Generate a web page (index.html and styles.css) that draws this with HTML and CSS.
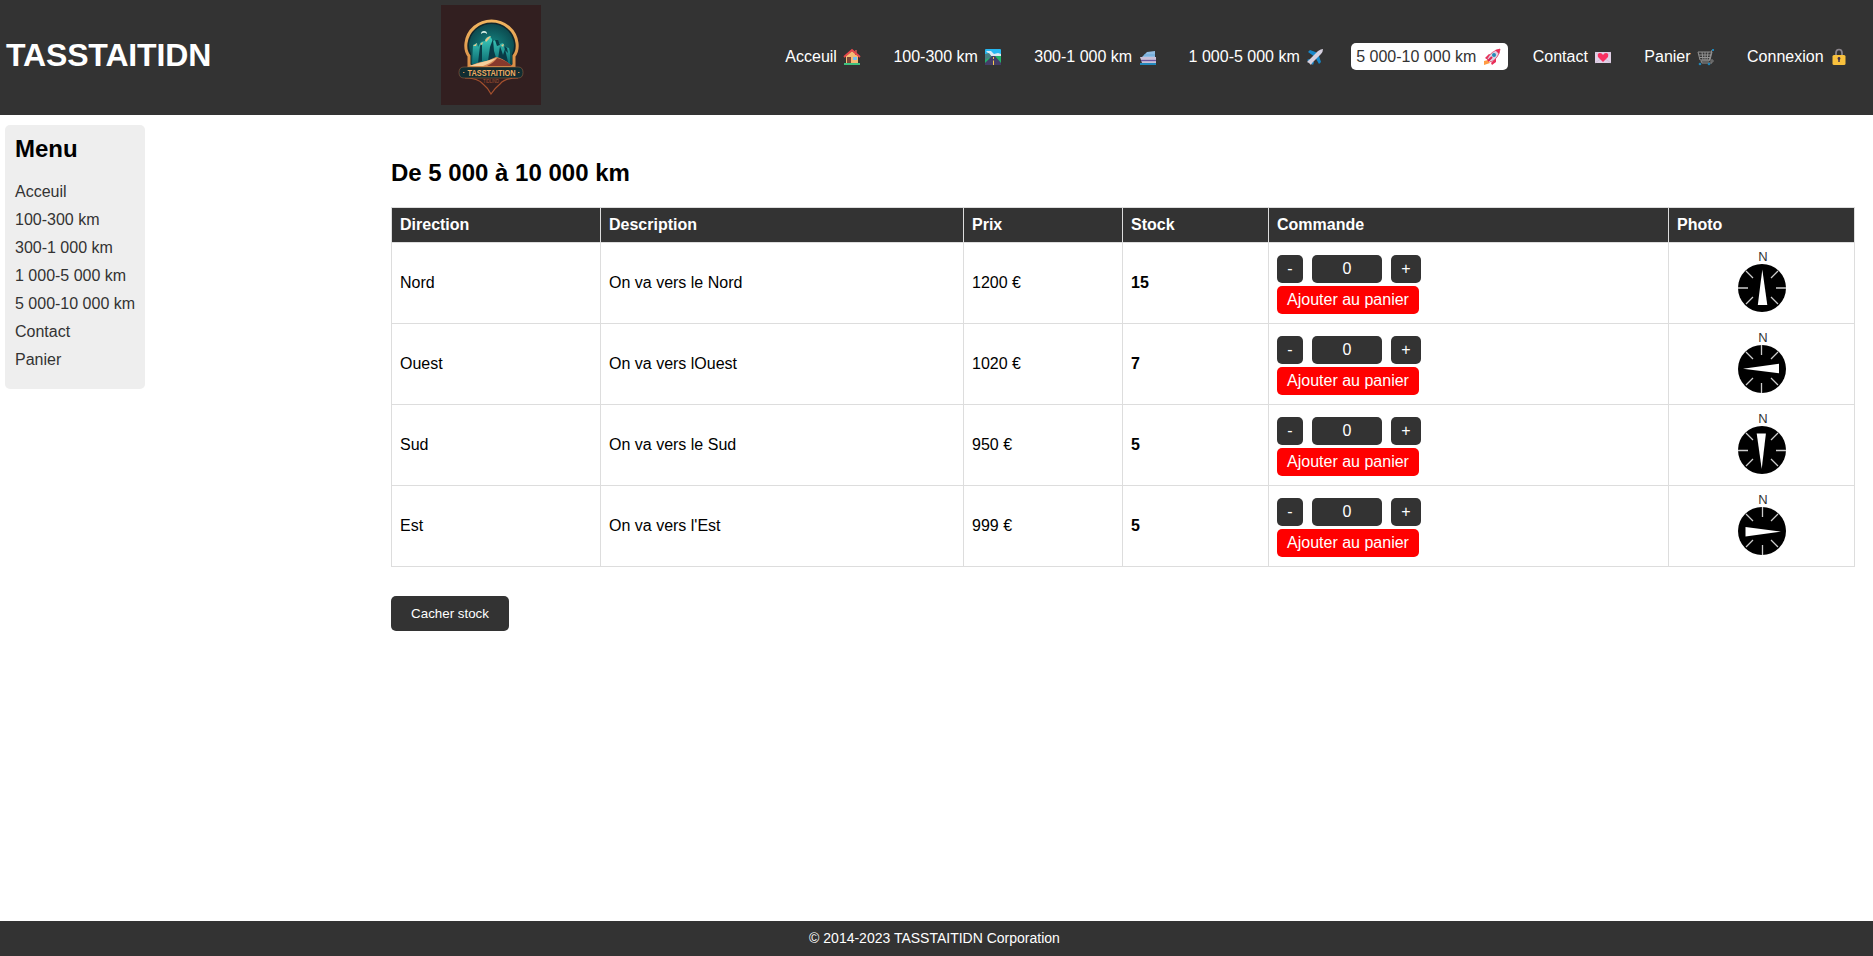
FILE: index.html
```
<!DOCTYPE html>
<html lang="fr">
<head>
<meta charset="utf-8">
<title>TASSTAITIDN</title>
<link rel="stylesheet" href="styles.css">
</head>
<body>
<header class="header">
  <h1 class="brand">TASSTAITIDN</h1>
  <svg class="logo" viewBox="0 0 100 100">
    <defs>
      <linearGradient id="gold" x1="0" y1="0" x2="0" y2="1"><stop offset="0" stop-color="#f0b45f"/><stop offset="1" stop-color="#d98e48"/></linearGradient>
      <radialGradient id="sky" cx=".5" cy=".55" r=".6"><stop offset="0" stop-color="#148a86"/><stop offset="1" stop-color="#0b4248"/></radialGradient>
      <linearGradient id="rock" x1="0" y1="0" x2="0" y2="1"><stop offset="0" stop-color="#3fd0c0"/><stop offset="1" stop-color="#0c6a70"/></linearGradient>
    </defs>
    <rect width="100" height="100" fill="#321f20"/>
    <path d="M28 61V51Q24 46 25 38A25.7 25.2 0 0 1 76 38Q77 46 73 51V61Z" fill="#10262b" stroke="url(#gold)" stroke-width="3"/>
    <path d="M30 60V49Q27 42 28.500 36A22.500 21.500 0 0 1 72.500 36Q74 43 71 49V60Z" fill="url(#sky)"/>
    <path d="M40 29a3 3 0 0 1 6 0q-3-2.500-6 0Z" fill="#dcf3e8"/>
    <path d="M31 59L32 40l4-2 1 4 3-5 4-1 1-3 4-2 3 5 3-1 4 4 3-1 2 4 4 1 1 4v12Z" fill="url(#rock)"/>
    <path d="M37 58l2-17 2-3 0 18ZM47 56l2-14 3-8 1 12 3 10-4-3-2 4ZM57 54l2-13 3 9 2-6 3 13ZM54 35l3 0 2 5-3 1ZM63 41l3 2 1 5-3-3Z" fill="#093b46"/>
    <path d="M44 35l3-3 3-1-2 3-3 3ZM32 41l4-3-1 3ZM39 39l3-2-1 3ZM60 40l3-1-1 3Z" fill="#e6c58a"/>
    <path d="M28 61q9-4 18-5l9-4q7 1 16 9Z" fill="#d98b58"/>
    <path d="M56 53q-2 4-10 8h25q-6-6-15-8Z" fill="#873a2d"/>
    <path d="M28 61q13-4 28-8-6 5-14 8Z" fill="#f5d09d"/>
    <path d="M24 73q13 0 18 6 5 4 8 10 4-6 9-10 5-6 18-6" fill="none" stroke="#a4502e" stroke-width="1.200"/>
    <path d="M23 62H77Q82 62 82 67.500T77 73H23Q18 73 18 67.500T23 62Z" fill="#102d31" stroke="#a76b42" stroke-width=".5"/>
    <text x="26.500" y="71.200" class="logo-name" textLength="48" lengthAdjust="spacingAndGlyphs">TASSTAITION</text>
    <text x="42" y="78" class="logo-sub" textLength="16" lengthAdjust="spacingAndGlyphs">TIDLIND</text>
    <path d="M22 67.500h1.500M77 67.500h1.500" stroke="#c98850"/>
  </svg>
  <nav class="nav">
    <a class="nav-link">Acceuil <svg class="emoji" viewBox="0 0 22 18"><path d="M3 15h16v2H3Z" fill="#3fc380"/><path d="M5 8l6-5 6 5v7H5Z" fill="#f5bb75"/><path d="M14 2h2v5h-2Z" fill="#a5504b"/><path d="M3 9l8-7 8 7" fill="none" stroke="#e8474c" stroke-width="1.800"/><path d="M6 9h4v6H6Z" fill="#7b4538"/><path d="M12 9h4v3h-4Z" fill="#78bff0"/></svg></a>
    <a class="nav-link">100-300 km <svg class="emoji" viewBox="0 0 22 18"><rect x="3" y="1" width="16" height="16" rx="1" fill="#26b8f2"/><path d="M3 8h16v9H3Z" fill="#22b36b"/><path d="M4 3l5 0 3 3 4-1 3 1v2H9Z" fill="#dbe9f3"/><path d="M3 6l4-1 3 4-3 1-4 2Z" fill="#477f83"/><path d="M10 8h3l6 7v2H3v-2Z" fill="#443d67"/><path d="M11.500 9v2m0 1.500V17" stroke="#f8cb4c"/></svg></a>
    <a class="nav-link">300-1 000 km <svg class="emoji" viewBox="0 0 22 18"><path d="M3 15h16v2H3Z" fill="#2189bd"/><path d="M6 8l4-4 8-1v6H5Z" fill="#8fbce2"/><path d="M3 9h16v6H5Z" fill="#c8bfd7"/><path d="M7 7h11" stroke="#64a7d7"/><path d="M4 12.500h15" stroke="#69529b" stroke-width="1.300"/></svg></a>
    <a class="nav-link">1 000-5 000 km <svg class="emoji" viewBox="0 0 22 18"><path d="M4 4l2-2 8 3 3 9-2 2-4-7ZM3 12l2-1 5 3-1 3Z" fill="#1686c8"/><path d="M5 12l9-9q3-2 5-2 0 3-2 5l-9 9-1 2-2-2-2-1Z" fill="#d6d0df"/></svg></a>
    <a class="nav-link active">5 000-10 000 km <svg class="emoji" viewBox="0 0 22 18"><path d="M3 13l4-1 2 3-6 2Z" fill="#ff9b43"/><path d="M4 10l4-4 3 1-4 5ZM10 15l5-5v4l-4 3Z" fill="#e82e58"/><path d="M6 11q4-8 13-10-1 9-9 13Z" fill="#ddd4e2" stroke="#e23b61" stroke-width=".8"/><path d="M14 2l5-1-1 5Z" fill="#e72d58"/><circle cx="13" cy="7" r="2" fill="#238bb7"/><path d="M7 13l4-4" stroke="#de2454" stroke-width="2"/></svg></a>
    <a class="nav-link">Contact <svg class="emoji" viewBox="0 0 22 18"><rect x="3" y="4" width="16" height="11" fill="#e0d0e5"/><path d="M3 4l7 6-7 5M19 4l-7 6 7 5" fill="none" stroke="#cdbbd5" stroke-width=".8"/><path d="M11 14L6 9q-1-4 2-4 2 0 3 2 1-2 3-2 3 0 2 4Z" fill="#f92f60"/></svg></a>
    <a class="nav-link">Panier <svg class="emoji" viewBox="0 0 22 18"><path d="M3 4l2 8h11l2-8Z" fill="#353535"/><path d="M19 2h-2l-3 11H6l1 2h10M3 4h14l-2 8H5ZM4 7h12M4.500 9.500H16M7 4l1 8M10 4v8M13 4l-1 8" fill="none" stroke="#929292" stroke-width="1"/><path d="M17 2h2" stroke="#2184b5" stroke-width="2"/><circle cx="5" cy="16" r="1.300" fill="#2184b5"/><circle cx="14" cy="16" r="1.300" fill="#2184b5"/><circle cx="17" cy="13" r="1.200" fill="none" stroke="#858585"/></svg></a>
    <a class="nav-link">Connexion <svg class="emoji" viewBox="0 0 22 18"><path d="M8 8V5q0-3.500 3-3.500T14 5v3" fill="none" stroke="#8b858c" stroke-width="1.700"/><rect x="4.500" y="7" width="13" height="10" rx="1.500" fill="#f9c13d"/><path d="M11 10v4" stroke="#443249" stroke-width="1.500"/><circle cx="11" cy="10.500" r="1.400" fill="#443249"/></svg></a>
  </nav>
</header>
<div class="page">
  <aside class="menu">
    <h2 class="menu-title">Menu</h2>
    <ul class="menu-list"><li>Acceuil</li><li>100-300 km</li><li>300-1 000 km</li><li>1 000-5 000 km</li><li>5 000-10 000 km</li><li>Contact</li><li>Panier</li></ul>
  </aside>
  <main class="content">
    <h2 class="title">De 5 000 à 10 000 km</h2>
    <table class="products">
      <colgroup><col class="c-dir"><col class="c-desc"><col class="c-price"><col class="c-stock"><col class="c-order"><col class="c-photo"></colgroup>
      <thead><tr><th>Direction</th><th>Description</th><th>Prix</th><th>Stock</th><th>Commande</th><th>Photo</th></tr></thead>
      <tbody>
        <tr><td>Nord</td><td>On va vers le Nord</td><td>1200 €</td><td class="stock">15</td>
          <td><div class="qty"><button class="btn minus">-</button><span class="btn count">0</span><button class="btn plus">+</button></div><button class="btn add">Ajouter au panier</button></td>
          <td><svg class="compass" viewBox="-30 -40 60 70"><text class="north" x="1" y="-27.500">N</text><circle r="24"/><path class="tick" d="M-24 0h10M14 0h10M-16-17l7 7M16-17l-7 7M-16 16l7-7M16 16l-7-7"/><path class="needle" d="M.3-18.500L5.300 17H-4.200Z"/></svg></td></tr>
        <tr><td>Ouest</td><td>On va vers lOuest</td><td>1020 €</td><td class="stock">7</td>
          <td><div class="qty"><button class="btn minus">-</button><span class="btn count">0</span><button class="btn plus">+</button></div><button class="btn add">Ajouter au panier</button></td>
          <td><svg class="compass" viewBox="-30 -40 60 70"><text class="north" x="1" y="-27.500">N</text><circle r="24"/><path class="tick" d="M-.5-24v10M-.5 14v10M-16-17l7 7M16-17l-7 7M-16 16l7-7M16 16l-7-7"/><path class="needle" d="M-19-.3L17-5.300V4.200Z"/></svg></td></tr>
        <tr><td>Sud</td><td>On va vers le Sud</td><td>950 €</td><td class="stock">5</td>
          <td><div class="qty"><button class="btn minus">-</button><span class="btn count">0</span><button class="btn plus">+</button></div><button class="btn add">Ajouter au panier</button></td>
          <td><svg class="compass" viewBox="-30 -40 60 70"><text class="north" x="1" y="-27.500">N</text><circle r="24"/><path class="tick" d="M-24 .5h10M14 .5h10M-16-17l7 7M16-17l-7 7M-16 16l7-7M16 16l-7-7"/><path class="needle" d="M-.3 19L-5.300-16.500H3.900Z"/></svg></td></tr>
        <tr><td>Est</td><td>On va vers l'Est</td><td>999 €</td><td class="stock">5</td>
          <td><div class="qty"><button class="btn minus">-</button><span class="btn count">0</span><button class="btn plus">+</button></div><button class="btn add">Ajouter au panier</button></td>
          <td><svg class="compass" viewBox="-30 -40 60 70"><text class="north" x="1" y="-27.500">N</text><circle r="24"/><path class="tick" d="M.5-24v10M.5 14v10M-16-17l7 7M16-17l-7 7M-16 16l7-7M16 16l-7-7"/><path class="needle" d="M19 .5L-16.500-3.900V5.500Z"/></svg></td></tr>
      </tbody>
    </table>
    <button class="toggle">Cacher stock</button>
  </main>
</div>
<footer class="footer">© 2014-2023 TASSTAITIDN Corporation</footer>
</body>
</html>
```
FILE: styles.css
```
* { box-sizing: border-box; }
body {
  margin: 0;
  height: 956px;
  display: flex;
  flex-direction: column;
  font: 16px/18px "Liberation Sans", Arial, sans-serif;
  color: #000;
  background: #fff;
}
h1, h2, ul { margin: 0; padding: 0; }
button { font-family: inherit; border: 0; }
.header {
  height: 115px;
  padding: 5px 18px 10px 6px;
  display: grid;
  grid-template-columns: 435px 100px 1fr;
  align-items: center;
  background: #333;
  color: #fff;
}
.brand { font-size: 32px; line-height: 36px; letter-spacing: -0.15px; padding-bottom: 1px; }
.logo { display: block; width: 100px; height: 100px; }
.logo-name { font: bold 9.5px "Liberation Sans", sans-serif; fill: #efa960; }
.logo-sub { font: 5.5px "Liberation Sans", sans-serif; fill: #a65132; }
.nav { display: flex; justify-content: flex-end; gap: 20px; padding-top: 3px; }
.nav-link {
  display: flex;
  align-items: center;
  height: 27px;
  padding: 0 5px;
  border-radius: 5px;
  white-space: pre;
}
.active { background: #fff; color: #333; }
.emoji { width: 22px; height: 18px; flex: none; }
.page { flex: 1; display: flex; align-items: flex-start; padding: 10px 18px 0 5px; }
.menu {
  width: 140px;
  height: 264px;
  padding: 10px;
  border-radius: 5px;
  background: #eee;
}
.menu-title { font-size: 24px; line-height: 28px; margin-bottom: 15px; }
.menu-list { list-style: none; color: #333; line-height: 28px; white-space: nowrap; }
.content { width: 1464px; margin-left: auto; padding-top: 34px; }
.title { font-size: 24px; line-height: 28px; margin-bottom: 20px; }
.products { width: 1464px; table-layout: fixed; border-collapse: collapse; }
.products th, .products td { border: 1px solid #ddd; padding: 0 8px; text-align: left; vertical-align: middle; }
.products th { height: 35px; background: #333; color: #fff; }
.products td { height: 81px; }
.products .stock { font-weight: bold; }
.c-dir { width: 209px; }
.c-desc { width: 363px; }
.c-price { width: 159px; }
.c-stock { width: 146px; }
.c-order { width: 400px; }
.c-photo { width: 186px; }
.qty { display: flex; gap: 9px; margin: 3px 0; }
.btn {
  display: block;
  height: 28px;
  padding: 0;
  border-radius: 5px;
  background: #333;
  color: #fff;
  font-size: 16px;
  line-height: 28px;
  text-align: center;
}
.minus { width: 26px; }
.count { width: 70px; }
.plus { width: 30px; }
.add { width: 142px; background: #f00; }
.compass { display: block; width: 60px; height: 70px; margin: 0 auto 1px; }
.north { font: 13px "Liberation Sans", Arial, sans-serif; fill: #333; text-anchor: middle; }
.tick { stroke: #ccc; stroke-width: 1.3; }
.needle { fill: #fff; }
.toggle {
  display: block;
  width: 118px;
  height: 35px;
  margin-top: 29px;
  border-radius: 5px;
  background: #333;
  color: #fff;
  font-size: 13.333px;
}
.footer {
  height: 35px;
  padding-right: 4px;
  background: #333;
  color: #fff;
  font-size: 14px;
  line-height: 35px;
  text-align: center;
}
```
